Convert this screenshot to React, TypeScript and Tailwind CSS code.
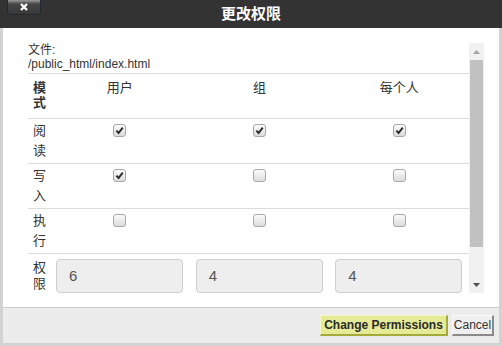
import { Fragment } from "react";

const FONT = "font-['Liberation_Sans','Noto_Sans_CJK_SC',sans-serif]";

const ROWS = [
  { label: "阅读", checks: [true, true, true] },
  { label: "写入", checks: [true, false, false] },
  { label: "执行", checks: [false, false, false] },
];

const MODES = ["6", "4", "4"];

function Check({ on }: { on: boolean }) {
  return (
    <span className="inline-flex h-[13px] w-[13px] items-center justify-center rounded-[3px] border border-[#a8a8a8] bg-linear-to-b from-[#fbfbfb] to-[#dcdcdc]">
      {on && (
        <svg viewBox="0 0 10 10" className="h-[9px] w-[9px]">
          <path d="M1.5 5.2 L4 7.8 L8.6 1.8" stroke="#2b2b2b" strokeWidth="2.2" fill="none" />
        </svg>
      )}
    </span>
  );
}

function Scrollbar() {
  return (
    <div className="flex h-full w-[15px] flex-col bg-[#f1f1f1]">
      <div className="flex h-[17px] items-center justify-center">
        <svg viewBox="0 0 7 4" className="h-[4px] w-[7px]">
          <path d="M0 4 L3.5 0 L7 4 Z" fill="#a3a3a3" />
        </svg>
      </div>
      <div className="mx-[1px] h-[187px] bg-[#c1c1c1]" />
      <div className="flex-1" />
      <div className="flex h-[17px] items-center justify-center">
        <svg viewBox="0 0 7 4" className="h-[4px] w-[7px]">
          <path d="M0 0 L3.5 4 L7 0 Z" fill="#505050" />
        </svg>
      </div>
    </div>
  );
}

export default function App() {
  return (
    <div className={`flex h-[346px] w-[502px] flex-col bg-white text-[#333] ${FONT}`}>
      <div className="grid h-[28px] grid-cols-[41px_1fr_41px] items-center bg-[#333]">
        <button className="ml-[7px] flex h-[15px] w-[34px] items-center justify-center self-start rounded-b-[4px] border border-t-0 border-[#1e2a2f] bg-linear-to-b from-[#9a9a9a] via-[#454545] via-30% to-[#383838]">
          <svg viewBox="0 0 8 8" className="h-[8px] w-[8px]">
            <path d="M1 1 L7 7 M7 1 L1 7" stroke="white" strokeWidth="2.4" />
          </svg>
        </button>
        <h1 className="text-center text-[15px] font-bold text-white">更改权限</h1>
        <span />
      </div>

      <div className="flex flex-1 flex-col border-x-[3px] border-b-[3px] border-[#d2d2d2]">
        <div className="flex pb-[14px] pl-[25px] pr-[15px] pt-[15px]">
          <div className="h-[250px] flex-1 overflow-hidden">
            <div className="border-b border-[#dcdcdc] pb-[2px] text-[12px] leading-[14px]">
              <p>文件:</p>
              <p>/public_html/index.html</p>
            </div>

            <div className="grid h-[45px] grid-cols-[22px_repeat(3,1fr)] border-b border-[#dcdcdc] pt-[6px] text-[13px] leading-[15px]">
              <span className="pl-[5px] font-bold">模式</span>
              <span className="text-center">用户</span>
              <span className="text-center">组</span>
              <span className="text-center">每个人</span>
            </div>

            {ROWS.map((r) => (
              <div
                key={r.label}
                className="grid h-[45px] grid-cols-[22px_repeat(3,1fr)] border-b border-[#dcdcdc] text-[13px] leading-[20px]"
              >
                <span className="pl-[5px] pt-[2px]">{r.label}</span>
                {r.checks.map((c, i) => (
                  <Fragment key={i}>
                    <div className="flex justify-center pt-[5px]">
                      <Check on={c} />
                    </div>
                  </Fragment>
                ))}
              </div>
            ))}

            <div className="grid h-[45px] grid-cols-[22px_repeat(3,1fr)] text-[13px] leading-[16px]">
              <span className="pl-[5px] pt-[6px]">权限</span>
              {MODES.map((m, i) => (
                <div key={i} className="pl-[6px] pt-[5px]">
                  <div className="flex h-[34px] w-[127px] items-center rounded-[4px] border border-[#cfcfcf] bg-[#eeeeee] pl-[12px] text-[15px] text-[#555]">
                    {m}
                  </div>
                </div>
              ))}
            </div>
          </div>
          <Scrollbar />
        </div>

        <div className="flex flex-1 items-start justify-end gap-[4px] border-t border-[#cccccc] bg-[#ececec] pr-[5px] pt-[7px]">
          <button className="h-[21px] w-[128px] border border-b-2 border-r-2 border-[#f4f7cc] border-b-[#a3aa3a] border-r-[#a3aa3a] bg-[#e4ea95] text-[12px] font-bold leading-none text-[#2a2a2a]">
            Change Permissions
          </button>
          <button className="h-[21px] w-[42px] border border-b-2 border-r-2 border-[#fafafa] border-b-[#8a8a8a] border-r-[#8a8a8a] bg-[#efefef] text-[12px] leading-none text-[#333]">
            Cancel
          </button>
        </div>
      </div>
    </div>
  );
}
